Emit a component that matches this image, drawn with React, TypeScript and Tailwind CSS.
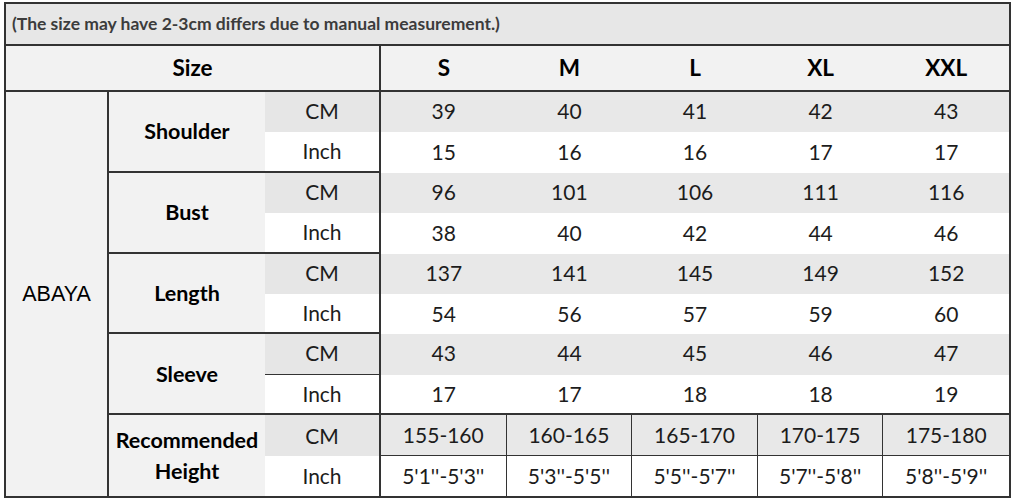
import React from "react";

const sizes = ["S", "M", "L", "XL", "XXL"];

const groups = [
  { label: "Shoulder", cm: ["39", "40", "41", "42", "43"], inch: ["15", "16", "16", "17", "17"] },
  { label: "Bust", cm: ["96", "101", "106", "111", "116"], inch: ["38", "40", "42", "44", "46"] },
  { label: "Length", cm: ["137", "141", "145", "149", "152"], inch: ["54", "56", "57", "59", "60"] },
  { label: "Sleeve", cm: ["43", "44", "45", "46", "47"], inch: ["17", "17", "18", "18", "19"] },
];

const recCm = ["155-160", "160-165", "165-170", "170-175", "175-180"];
const recInch = ["5'1''-5'3''", "5'3''-5'5''", "5'5''-5'7''", "5'7''-5'8''", "5'8''-5'9''"];

const font = { fontFamily: "Lato, 'Open Sans', sans-serif" };

export default function App() {
  return (
    <div className="w-[1014px] h-[500px] bg-white pt-[2px] pl-[4px]" style={font}>
      <div className="w-[1007px] h-[496px] border-2 border-[#333333] grid grid-cols-[103px_156px_116px_repeat(5,1fr)] grid-rows-[42px_46px_repeat(10,1fr)] text-[#1c1c1c]">
        {/* title */}
        <div className="col-span-8 border-b-2 border-[#333333] bg-[#e7e7e7] flex items-center pl-[6px] text-[17.5px] font-bold text-[#3c3c3c]">
          (The size may have 2-3cm differs due to manual measurement.)
        </div>
        {/* size header */}
        <div className="col-span-3 border-b-2 border-r-2 border-[#333333] bg-[#f2f2f2] flex items-center justify-center text-[22.5px] font-bold text-black">
          Size
        </div>
        {sizes.map((s) => (
          <div key={s} className="border-b-2 border-[#333333] bg-[#f2f2f2] flex items-center justify-center text-[22.5px] font-bold text-black">
            {s}
          </div>
        ))}
        {/* ABAYA */}
        <div
          className="row-span-10 border-r-2 border-[#333333] bg-[#f2f2f2] flex items-center justify-center text-[21.5px] text-black"
          style={{ fontFamily: "'Liberation Sans', Arial, sans-serif" }}
        >
          ABAYA
        </div>
        {groups.map((g, gi) => {
          const isSleeve = gi === 3;
          return (
            <React.Fragment key={g.label}>
              <div className="row-span-2 border-b-2 border-[#333333] bg-[#f2f2f2] flex items-center justify-center text-[21.5px] font-bold text-black">
                {g.label}
              </div>
              <div
                className={
                  "border-r-2 border-[#333333] bg-[#e6e6e6] flex items-center justify-center pb-[3px] text-[21px] " +
                  (isSleeve ? "border-b-[1.5px]" : "")
                }
              >
                CM
              </div>
              {g.cm.map((v, i) => (
                <div key={"c" + i} className="bg-[#e8e8e8] flex items-center justify-center pb-[3px] text-[21px]">
                  {v}
                </div>
              ))}
              <div className="border-r-2 border-b-2 border-[#333333] bg-white flex items-center justify-center pb-[1px] text-[21px]">
                Inch
              </div>
              {g.inch.map((v, i) => (
                <div
                  key={"i" + i}
                  className={
                    "bg-white flex items-center justify-center pb-[1px] text-[21px] " +
                    (isSleeve ? "border-b-2 border-[#333333]" : "")
                  }
                >
                  {v}
                </div>
              ))}
            </React.Fragment>
          );
        })}
        {/* Recommended Height */}
        <div className="row-span-2 bg-[#f2f2f2] flex flex-col items-center justify-center text-[21.5px] font-bold text-black leading-[31px]">
          <span>Recommended</span>
          <span>Height</span>
        </div>
        <div className="border-r-2 border-[#333333] bg-[#e6e6e6] flex items-center justify-center text-[21px]">
          CM
        </div>
        {recCm.map((v, i) => (
          <div
            key={"rc" + i}
            className={
              "bg-[#e8e8e8] border-b-[1.5px] border-[#333333] flex items-center justify-center text-[21px] " +
              (i < 4 ? "border-r-[1.5px]" : "")
            }
          >
            {v}
          </div>
        ))}
        <div className="border-r-2 border-[#333333] bg-white flex items-center justify-center text-[21px]">
          Inch
        </div>
        {recInch.map((v, i) => (
          <div
            key={"ri" + i}
            className={
              "bg-white border-[#333333] flex items-center justify-center text-[21px] " +
              (i < 4 ? "border-r-[1.5px]" : "")
            }
          >
            {v}
          </div>
        ))}
      </div>
    </div>
  );
}
